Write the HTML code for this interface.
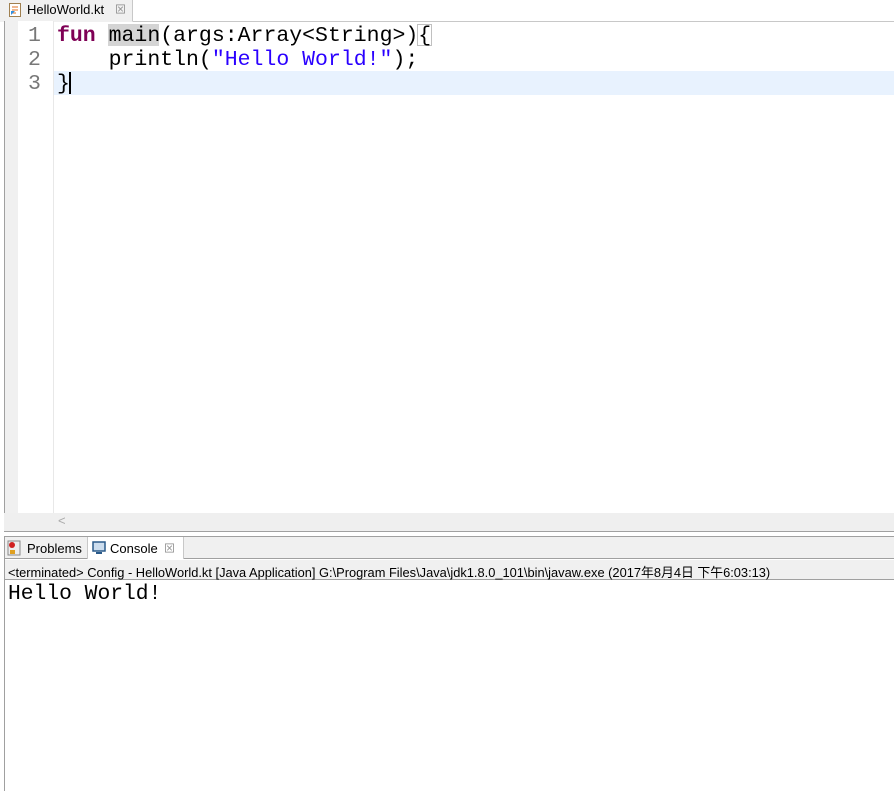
<!DOCTYPE html>
<html><head><meta charset="utf-8"><style>
body{margin:0;width:894px;height:791px;background:#fff;position:relative;overflow:hidden;font-family:"Liberation Sans","Noto Sans CJK SC",sans-serif}
.a{position:absolute}
.code{font-family:"Liberation Mono",monospace;font-size:21.5px;line-height:24px;white-space:pre}
</style></head><body>
<div class="a" style="left:0;top:0;width:894px;height:21px;background:#fff;border-bottom:1px solid #c8c8c8"></div>
<div class="a" style="left:0;top:0;width:132px;height:21px;background:#f0f0f0;border-right:1px solid #c8c8c8;border-bottom:1px solid #f0f0f0"></div>
<svg class="a" style="left:9px;top:3px" width="12" height="14"><rect x="0.5" y="0.5" width="11" height="13" fill="#fff" stroke="#a08050"/><path d="M3 4h6M3 7h6M3 10h4" stroke="#e07020"/><path d="M2 12L6 8 2 8z" fill="#3090e0"/></svg>
<div class="a" style="left:27px;top:2px;font-size:13px;color:#000">HelloWorld.kt</div>
<div class="a" style="left:115px;top:1px;font-size:11px;color:#888">⊠</div>
<div class="a" style="left:4px;top:21px;width:14px;height:492px;background:#f0f0f0"></div>
<div class="a" style="left:4px;top:21px;width:1px;height:511px;background:#a0a0a0"></div>
<div class="a" style="left:18px;top:21px;width:35px;height:492px;background:#fff;border-right:1px solid #e8e8e8"></div>
<div class="a" style="left:54px;top:71px;width:840px;height:24px;background:#e8f2fe"></div>
<div class="a code" style="left:28px;top:24px;color:#787878">1
2
3</div>
<div class="a" style="left:108px;top:24px;width:51px;height:22px;background:#d4d4d4"></div>
<div class="a" style="left:417px;top:24px;width:15px;height:22px;border:1px solid #c0c0c0;box-sizing:border-box"></div>
<div class="a code" style="left:57px;top:24px;color:#000"><b style="color:#7f0055">fun</b> main(args:Array&lt;String&gt;){
    println(<span style="color:#2a00ff">"Hello World!"</span>);
}</div>
<div class="a" style="left:69px;top:72px;width:2px;height:22px;background:#000"></div>
<div class="a" style="left:4px;top:513px;width:890px;height:18px;background:#efefef"></div>
<div class="a" style="left:58px;top:513px;font-size:13px;color:#aaa">&lt;</div>
<div class="a" style="left:4px;top:531px;width:890px;height:1px;background:#a0a0a0"></div>
<div class="a" style="left:0;top:532px;width:894px;height:4px;background:#fff"></div>
<div class="a" style="left:4px;top:536px;width:890px;height:23px;background:#f0f0f0;border-top:1px solid #a0a0a0;border-bottom:1px solid #a0a0a0;box-sizing:border-box"></div>
<div class="a" style="left:4px;top:536px;width:1px;height:255px;background:#a0a0a0"></div>
<div class="a" style="left:87px;top:537px;width:95px;height:22px;background:#fff;border-left:1px solid #c8c8c8;border-right:1px solid #c8c8c8"></div>
<svg class="a" style="left:7px;top:540px" width="14" height="16"><rect x="1" y="1" width="12" height="14" fill="#eee" stroke="#8a8a8a"/><circle cx="5" cy="5" r="3" fill="#d02020"/><rect x="3" y="10" width="5" height="4" fill="#e0a020"/></svg>
<div class="a" style="left:27px;top:541px;font-size:13px">Problems</div>
<svg class="a" style="left:92px;top:541px" width="14" height="14"><rect x="1" y="1" width="12" height="9" fill="#cde" stroke="#2a5a8a" stroke-width="1.5"/><rect x="4" y="11" width="6" height="2" fill="#2a5a8a"/></svg>
<div class="a" style="left:110px;top:541px;font-size:13px">Console</div>
<div class="a" style="left:164px;top:540px;font-size:11px;color:#888">⊠</div>
<div class="a" style="left:5px;top:560px;width:889px;height:19px;background:#f0f0f0;border-bottom:1px solid #a0a0a0"></div>
<div class="a" style="left:8px;top:562px;font-size:12.85px;color:#000;white-space:nowrap">&lt;terminated&gt; Config - HelloWorld.kt [Java Application] G:\Program Files\Java\jdk1.8.0_101\bin\javaw.exe (2017年8月4日 下午6:03:13)</div>
<div class="a code" style="left:8px;top:582px;font-size:21.3px;color:#000">Hello World!</div>
</body></html>
